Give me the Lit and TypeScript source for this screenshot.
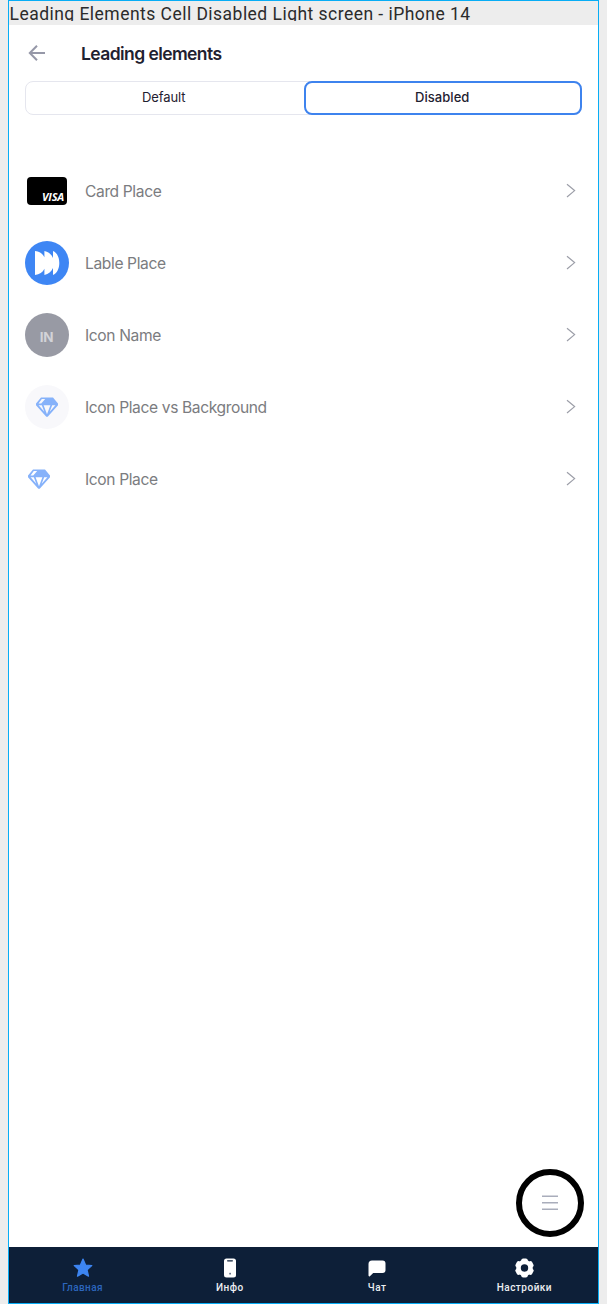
import { LitElement, html, css, svg } from "lit";
import { customElement } from "lit/decorators.js";

const gem = html`<svg class="gem" width="24" height="24" viewBox="0 0 24 24">
  <path fill="#86b2fa" fill-rule="evenodd" d="M6 2.600h12L23 8.600v1.600L12.700 21.800h-1.400L1 10.200V8.600z M6.800 4 3.500 8.400h2.700L10.200 4z M3.600 10.200l5.700 6.500-2.500-6.500z M8.600 10.200l3.400 9 3.400-9z M17.200 10.200l-2.500 6.500 5.700-6.500z"/>
</svg>`;

const visa = html`<div class="card"><span class="visa">VISA</span></div>`;

const label = html`<div class="circle blue"><svg width="44" height="44" viewBox="0 0 44 44">
  <path fill="#fff" d="M10 10c4.500.5 7.800 2.800 9.400 6.300V10c4.200.8 7 3.300 8.600 7V10c4 1.500 6.300 6.500 6.300 12s-2.300 10.500-6.300 12v-7c-1.600 3.700-4.400 6.200-8.600 7v-6.300C17.800 31.200 14.500 33.500 10 34z"/>
</svg></div>`;

const rows = [
  { text: "Card Place", lead: visa },
  { text: "Lable Place", lead: label },
  { text: "Icon Name", lead: html`<div class="circle grey"><span>IN</span></div>` },
  { text: "Icon Place vs Background", lead: html`<div class="circle pale">${gem}</div>` },
  { text: "Icon Place", lead: html`<div class="bare">${gem}</div>` },
];

const lobes = [0, 60, 120, 180, 240, 300];

const tabs = [
  { text: "Главная", active: true, icon: svg`<path fill="#3d85f2" stroke="#3d85f2" stroke-width="1.200" stroke-linejoin="round" d="M12 3l2.600 6 6.200.6-4.700 4.200 1.400 6.400L12 17l-5.500 3.200 1.400-6.400-4.700-4.200 6.200-.6z"/>` },
  { text: "Инфо", active: false, icon: svg`<rect x="6" y="2.500" width="12" height="19" rx="2.500" fill="#fff"/><rect x="9" y="4.200" width="6" height="1.300" rx=".65" fill="#0d1f38"/><rect x="11.200" y="16.700" width="1.800" height="1.800" rx=".5" fill="#69758a"/>` },
  { text: "Чат", active: false, icon: svg`<path fill="#fff" d="M7 4.500h10.500a3 3 0 0 1 3 3V14a3 3 0 0 1-3 3H8.200l-3.300 3.200c-.6.500-1.400.2-1.400-.6V8a3.500 3.500 0 0 1 3.500-3.500z"/>` },
  { text: "Настройки", active: false, icon: svg`<g transform="translate(.5 0)"><circle cx="12" cy="12" r="6" fill="none" stroke="#fff" stroke-width="4.600"/>${lobes.map((a) => svg`<rect x="8.700" y="2.500" width="6.600" height="4.500" rx="2" fill="#fff" transform="rotate(${a} 12 12)"/>`)}</g>` },
];

@customElement("app-root")
export class AppRoot extends LitElement {
  static styles = css`
    :host { display: block; box-sizing: border-box; height: 1304px; padding: 0 8px; background: #ededed; font-family: Inter, sans-serif; overflow: hidden; }
    * { box-sizing: border-box; }
    svg { display: block; }
    .frame { position: relative; height: 1304px; border: 1px solid #08adf5; display: flex; flex-direction: column; }
    .caption { height: 20px; margin-bottom: 4px; overflow: hidden; white-space: nowrap; font: 400 17.5px/26px Roboto, sans-serif; letter-spacing: .47px; color: #2b2b2b; padding-left: .5px; }
    .screen { flex: 1; background: #fff; display: flex; flex-direction: column; }
    header { height: 56px; padding-left: 16px; display: flex; align-items: center; }
    header svg { margin-right: 32px; }
    h1 { margin: 0; padding-top: 2px; font-size: 17.5px; line-height: 24px; font-weight: 600; letter-spacing: -.58px; color: #1f2130; white-space: nowrap; }
    .segments { margin: 0 16px; height: 34px; display: flex; border: 1px solid #e5e6ee; border-radius: 8px; }
    .segment { flex: 1 1 0; display: flex; align-items: center; justify-content: center; font-size: 13px; color: #1f2130; letter-spacing: -.1px; padding: 0 2px 2px 0; }
    .segment.on { margin: -1px -1px -1px 0; flex: 0 0 278.5px; border: 2px solid #3e83ee; border-radius: 8px; font-weight: 500; letter-spacing: .05px; padding-right: 1px; }
    .list { padding: 40px 16px 0; flex: 1; }
    .row { height: 72px; display: flex; align-items: center; }
    .lead { width: 44px; margin-right: 16px; display: flex; justify-content: center; }
    .name { flex: 1; padding-top: 2px; font-size: 15.6px; line-height: 24px; color: #7b7c80; letter-spacing: -.38px; white-space: nowrap; }
    .circle { width: 44px; height: 44px; border-radius: 50%; display: flex; align-items: center; justify-content: center; }
    .blue { background: #3e86f4; }
    .grey { background: #989aa4; color: #d2d3d8; font-size: 13.5px; font-weight: 700; letter-spacing: -.3px; padding: 3px 1px 0 0; }
    .pale { background: #f8f8fb; }
    .bare { width: 44px; padding-left: 2px; }
    .card { width: 40px; height: 28px; border-radius: 4px; background: #000; display: flex; align-items: flex-end; justify-content: flex-end; padding: 0 3px 2px 0; }
    .visa { color: #fff; font: italic 700 11px/12px "Open Sans", sans-serif; letter-spacing: -.2px; }
    .fab { position: absolute; right: 14px; bottom: 66px; width: 68px; height: 68px; border: 6px solid #000; border-radius: 50%; background: #fff; display: flex; align-items: center; justify-content: center; }
    nav { height: 56px; background: #0d1f38; display: flex; }
    .tab { flex: 1 1 0; padding-top: 9px; display: flex; flex-direction: column; align-items: center; color: #eceef1; font: 500 10px/14px Roboto, sans-serif; letter-spacing: .5px; }
    .tab svg { margin-bottom: 1px; }
    .tab.on { color: #2c66bd; letter-spacing: .4px; }
  `;

  render() {
    return html`<div class="frame">
      <div class="caption">Leading Elements Cell Disabled Light screen - iPhone 14</div>
      <div class="screen">
        <header>
          <svg width="24" height="24" viewBox="0 0 24 24" fill="none" stroke="#9698a8" stroke-width="2"><path d="M20 12H5M12 4.700 4.800 12l7.200 7.300"/></svg>
          <h1>Leading elements</h1>
        </header>
        <div class="segments"><div class="segment">Default</div><div class="segment on">Disabled</div></div>
        <div class="list">${rows.map((r) => html`<div class="row">
          <div class="lead">${r.lead}</div><div class="name">${r.text}</div>
          <svg width="24" height="24" viewBox="0 0 24 24" fill="none" stroke="#9c9ea8" stroke-width="1.200"><path d="M9 5.200 16.600 11.600 9 18"/></svg>
        </div>`)}</div>
        <nav>${tabs.map((t) => html`<div class="tab ${t.active ? "on" : ""}"><svg width="24" height="24" viewBox="0 0 24 24">${t.icon}</svg><span>${t.text}</span></div>`)}</nav>
      </div>
      <div class="fab"><svg width="24" height="24" viewBox="0 0 24 24" fill="none" stroke="#a9adbb" stroke-width="1.500"><path d="M4 5.300h16M4 11.700h16M4 18.200h16"/></svg></div>
    </div>`;
  }
}
